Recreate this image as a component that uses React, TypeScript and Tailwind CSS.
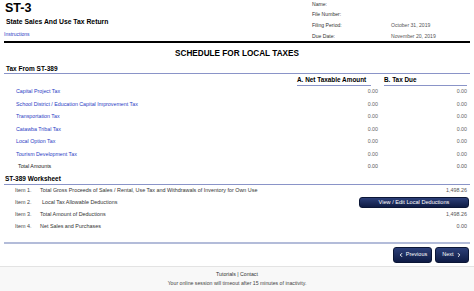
import { ChevronLeft, ChevronRight } from 'lucide-react';

const localTaxes = [
    'Capital Project Tax',
    'School District / Education Capital Improvement Tax',
    'Transportation Tax',
    'Catawba Tribal Tax',
    'Local Option Tax',
    'Tourism Development Tax',
];

const infoRows = [
    { label: 'Name:', value: '' },
    { label: 'File Number:', value: '' },
    { label: 'Filing Period:', value: 'October 31, 2019' },
    { label: 'Due Date:', value: 'November 20, 2019' },
];

const items = [
    { n: 'Item 1.', text: 'Total Gross Proceeds of Sales / Rental, Use Tax and Withdrawals of Inventory for Own Use', value: '1,498.26' },
    { n: 'Item 2.', text: 'Local Tax Allowable Deductions', value: null },
    { n: 'Item 3.', text: 'Total Amount of Deductions', value: '1,498.26' },
    { n: 'Item 4.', text: 'Net Sales and Purchases', value: '0.00' },
];

function NavyButton({ children, className = '' }: { children: React.ReactNode; className?: string }) {
    return (
        <button
            className={`flex items-center justify-center rounded-[3px] border border-[#0b1636] bg-gradient-to-b from-[#2c3f78] to-[#0f1c45] text-white whitespace-nowrap ${className}`}
        >
            {children}
        </button>
    );
}

export default function App() {
    return (
        <div className="w-[474px] h-[291px] bg-white overflow-hidden font-['Liberation_Sans',Arial,sans-serif] text-[#333]">
            {/* Header */}
            <div className="flex h-[41px] px-[4px]">
                <div className="flex-1 flex flex-col">
                    <div className="h-[17px] leading-[17px] text-[12.5px] font-bold text-black pl-[1px]">ST-3</div>
                    <div className="h-[10px] leading-[10px] text-[6.8px] font-bold text-black pl-[2px]">State Sales And Use Tax Return</div>
                    <div className="h-[10px] leading-[10px] text-[5px] text-[#2a3cc4] mt-[2px]">Instructions</div>
                </div>
                <div className="w-[158px] flex flex-col text-[5.1px]">
                    {infoRows.map((r, i) => (
                        <div key={r.label} className={`flex ${i === 0 ? 'h-[9px] leading-[9px]' : 'h-[11px] leading-[11px]'}`}>
                            <span className="w-[79px] text-[#333]">{r.label}</span>
                            <span className="text-[#555]">{r.value}</span>
                        </div>
                    ))}
                </div>
            </div>
            <div className="mx-[4px] h-[2px] bg-black" />

            <div className="h-[22px] flex items-center justify-center text-[8.2px] font-bold text-black">
                SCHEDULE FOR LOCAL TAXES
            </div>

            {/* Tax From ST-389 */}
            <div className="mx-[4px]">
                <div className="h-[9px] leading-[8px] pl-[2px] text-[6.5px] font-bold text-black border-b border-[#8a94c8]">
                    Tax From ST-389
                </div>
                <div className="flex justify-end pr-[3px] mt-[1px] h-[11px] text-[6.4px] font-bold text-black">
                    <div className="w-[74px] h-[11px] leading-[10px] border-b border-[#8a94c8]">A. Net Taxable Amount</div>
                    <div className="w-[83px] ml-[13px] h-[11px] leading-[10px] border-b border-[#8a94c8]">B. Tax Due</div>
                </div>
                {localTaxes.map(t => (
                    <div key={t} className="flex h-[12.5px] items-center text-[5.3px]">
                        <span className="flex-1 pl-[12px] text-[#2a3cc4]">{t}</span>
                        <span className="w-[80px] text-right text-[#666]">0.00</span>
                        <span className="w-[83px] ml-[6px] text-right text-[#666]">0.00</span>
                        <span className="w-[3px]" />
                    </div>
                ))}
                <div className="flex h-[12.5px] items-center text-[5.3px]">
                    <span className="flex-1 pl-[14px] text-[#222]">Total Amounts</span>
                    <span className="w-[80px] text-right text-[#555]">0.00</span>
                    <span className="w-[83px] ml-[6px] text-right text-[#555]">0.00</span>
                    <span className="w-[3px]" />
                </div>

                {/* Worksheet */}
                <div className="h-[11px] leading-[10px] pl-[1px] text-[6.5px] font-bold text-black border-b border-[#8a94c8]">
                    ST-389 Worksheet
                </div>
                {items.map(it => (
                    <div key={it.n} className="flex h-[12px] items-center text-[5.4px] whitespace-nowrap">
                        <span className="w-[36px] pl-[11px] text-[#444]">{it.n}</span>
                        <span className={`flex-1 ${it.value === null ? 'pl-[2px]' : ''}`}>{it.text}</span>
                        {it.value === null ? (
                            <NavyButton className="w-[110px] h-[11px] text-[5.6px] mr-[1px]">View / Edit Local Deductions</NavyButton>
                        ) : (
                            <span className="pr-[3px] text-[#555]">{it.value}</span>
                        )}
                    </div>
                ))}
                <div className="mt-[9px] h-[2px] bg-[#b3bcd9]" />
            </div>

            {/* Nav buttons */}
            <div className="flex justify-end gap-[3px] pr-[5px] mt-[3px] h-[16px]">
                <NavyButton className="w-[39px] h-[16px] text-[5.5px] gap-[2px]">
                    <ChevronLeft size={6} strokeWidth={4} />
                    Previous
                </NavyButton>
                <NavyButton className="w-[34px] h-[16px] text-[5.5px] gap-[2px]">
                    Next
                    <ChevronRight size={6} strokeWidth={4} />
                </NavyButton>
            </div>

            {/* Footer */}
            <div className="mt-[3px] h-[25px] border-t border-[#e3e3e3] bg-[#f8f8f8] pt-[3px] text-center">
                <div className="h-[9px] leading-[9px] text-[5.2px] text-[#333]">Tutorials | Contact</div>
                <div className="h-[8px] leading-[8px] text-[5.2px] text-[#444]">Your online session will timeout after 15 minutes of inactivity.</div>
            </div>
        </div>
    );
}
